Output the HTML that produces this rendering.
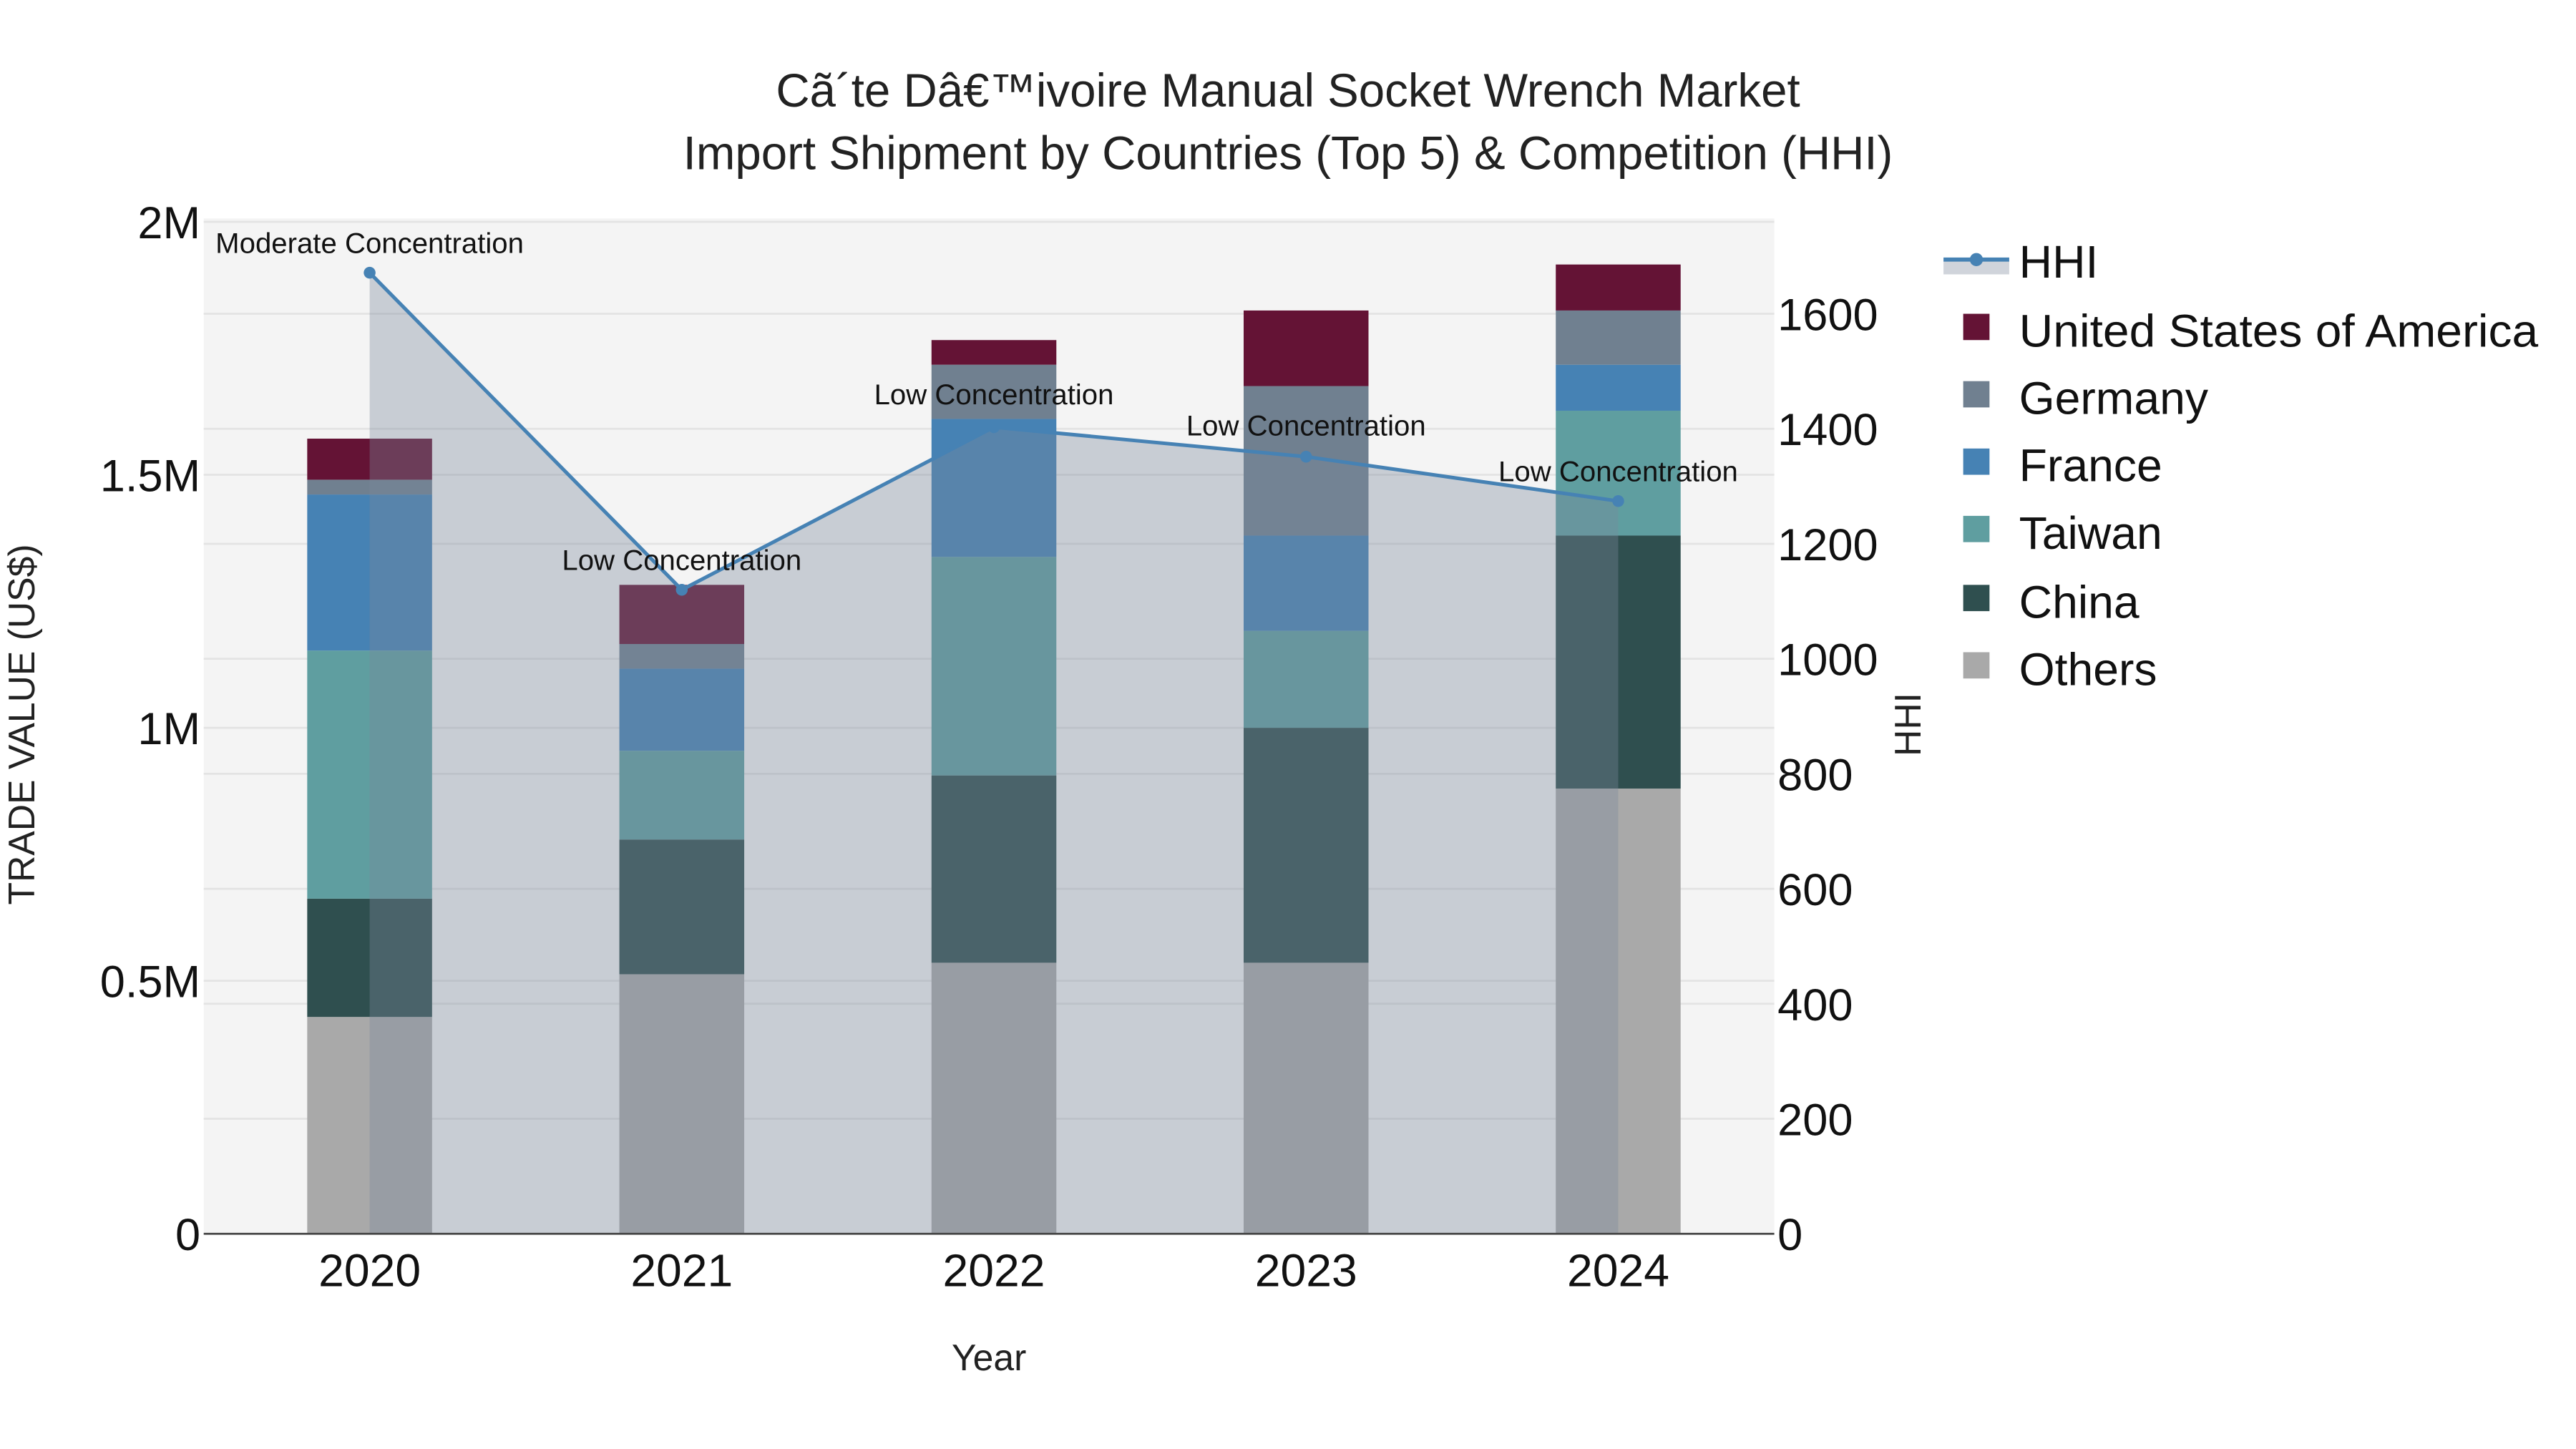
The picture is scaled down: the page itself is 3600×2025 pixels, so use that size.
<!DOCTYPE html>
<html><head><meta charset="utf-8"><style>html,body{margin:0;padding:0;background:#fff}svg{display:block}</style></head>
<body>
<svg width="3600" height="2025" viewBox="0 0 1568 882" xmlns="http://www.w3.org/2000/svg" font-family="Liberation Sans, Arial, sans-serif">
<rect x="0" y="0" width="1568" height="882" fill="#fff"/>
<rect x="124" y="133" width="956" height="618" fill="#f4f4f4"/>
<g stroke="#e3e3e3" stroke-width="1.2">
<line x1="124" x2="1080" y1="597" y2="597"/><line x1="124" x2="1080" y1="443" y2="443"/><line x1="124" x2="1080" y1="289" y2="289"/><line x1="124" x2="1080" y1="135" y2="135"/>
<line x1="124" x2="1080" y1="681" y2="681"/><line x1="124" x2="1080" y1="611" y2="611"/><line x1="124" x2="1080" y1="541" y2="541"/><line x1="124" x2="1080" y1="471" y2="471"/><line x1="124" x2="1080" y1="401" y2="401"/><line x1="124" x2="1080" y1="331" y2="331"/><line x1="124" x2="1080" y1="261" y2="261"/><line x1="124" x2="1080" y1="191" y2="191"/>
</g>
<g>
<rect x="187" y="619" width="76" height="132" fill="#a9a9a9"/><rect x="187" y="547" width="76" height="72" fill="#2f4f4f"/><rect x="187" y="396" width="76" height="151" fill="#5f9ea0"/><rect x="187" y="301" width="76" height="95" fill="#4682b4"/><rect x="187" y="292" width="76" height="9" fill="#708090"/><rect x="187" y="267" width="76" height="25" fill="#641335"/>
<rect x="377" y="593" width="76" height="158" fill="#a9a9a9"/><rect x="377" y="511" width="76" height="82" fill="#2f4f4f"/><rect x="377" y="457" width="76" height="54" fill="#5f9ea0"/><rect x="377" y="407" width="76" height="50" fill="#4682b4"/><rect x="377" y="392" width="76" height="15" fill="#708090"/><rect x="377" y="356" width="76" height="36" fill="#641335"/>
<rect x="567" y="586" width="76" height="165" fill="#a9a9a9"/><rect x="567" y="472" width="76" height="114" fill="#2f4f4f"/><rect x="567" y="339" width="76" height="133" fill="#5f9ea0"/><rect x="567" y="255" width="76" height="84" fill="#4682b4"/><rect x="567" y="222" width="76" height="33" fill="#708090"/><rect x="567" y="207" width="76" height="15" fill="#641335"/>
<rect x="757" y="586" width="76" height="165" fill="#a9a9a9"/><rect x="757" y="443" width="76" height="143" fill="#2f4f4f"/><rect x="757" y="384" width="76" height="59" fill="#5f9ea0"/><rect x="757" y="326" width="76" height="58" fill="#4682b4"/><rect x="757" y="235" width="76" height="91" fill="#708090"/><rect x="757" y="189" width="76" height="46" fill="#641335"/>
<rect x="947" y="480" width="76" height="271" fill="#a9a9a9"/><rect x="947" y="326" width="76" height="154" fill="#2f4f4f"/><rect x="947" y="250" width="76" height="76" fill="#5f9ea0"/><rect x="947" y="222" width="76" height="28" fill="#4682b4"/><rect x="947" y="189" width="76" height="33" fill="#708090"/><rect x="947" y="161" width="76" height="28" fill="#641335"/>
</g>
<polygon points="225,166 415,359 605,260 795,278 985,305 985,751 225,751" fill="rgb(122,136,155)" fill-opacity="0.36"/>
<polyline points="225,166 415,359 605,260 795,278 985,305" fill="none" stroke="#4682b4" stroke-width="2.2"/>
<g fill="#4682b4"><circle cx="225" cy="166" r="3.6"/><circle cx="415" cy="359" r="3.6"/><circle cx="605" cy="260" r="3.6"/><circle cx="795" cy="278" r="3.6"/><circle cx="985" cy="305" r="3.6"/></g>
<line x1="124" x2="1080" y1="751" y2="751" stroke="#444" stroke-width="1.2"/>
<g font-size="17.5" fill="#111" text-anchor="middle">
<text x="225" y="154">Moderate Concentration</text>
<text x="415" y="347">Low Concentration</text>
<text x="605" y="246">Low Concentration</text>
<text x="795" y="265">Low Concentration</text>
<text x="985" y="293">Low Concentration</text>
</g>
<g font-size="27.5" fill="#111" text-anchor="end">
<text x="122" y="145">2M</text><text x="122" y="299">1.5M</text><text x="122" y="453">1M</text><text x="122" y="607">0.5M</text><text x="122" y="761">0</text>
</g>
<g font-size="27.5" fill="#111">
<text x="1082" y="201">1600</text><text x="1082" y="271">1400</text><text x="1082" y="341">1200</text><text x="1082" y="411">1000</text><text x="1082" y="481">800</text><text x="1082" y="551">600</text><text x="1082" y="621">400</text><text x="1082" y="691">200</text><text x="1082" y="761">0</text>
</g>
<g font-size="28" fill="#111" text-anchor="middle">
<text x="225" y="783">2020</text><text x="415" y="783">2021</text><text x="605" y="783">2022</text><text x="795" y="783">2023</text><text x="985" y="783">2024</text>
</g>
<text x="602" y="834" font-size="22.5" fill="#222" text-anchor="middle">Year</text>
<text transform="translate(21,441) rotate(-90)" font-size="22.5" fill="#222" text-anchor="middle">TRADE VALUE (US$)</text>
<text transform="translate(1169,441) rotate(-90)" font-size="22.5" fill="#222" text-anchor="middle">HHI</text>
<g font-size="28.5" fill="#222" text-anchor="middle">
<text x="784" y="65">Cã´te Dâ€™ivoire Manual Socket Wrench Market</text>
<text x="784" y="103">Import Shipment by Countries (Top 5) &amp; Competition (HHI)</text>
</g>
<rect x="1183" y="159" width="40" height="8" fill="#d0d4db"/>
<line x1="1183" x2="1223" y1="158" y2="158" stroke="#4682b4" stroke-width="2.5"/>
<circle cx="1203" cy="158" r="4" fill="#4682b4"/>
<g>
<rect x="1195" y="191" width="16" height="16" fill="#641335"/>
<rect x="1195" y="232" width="16" height="16" fill="#708090"/>
<rect x="1195" y="273" width="16" height="16" fill="#4682b4"/>
<rect x="1195" y="314" width="16" height="16" fill="#5f9ea0"/>
<rect x="1195" y="356" width="16" height="16" fill="#2f4f4f"/>
<rect x="1195" y="397" width="16" height="16" fill="#a9a9a9"/>
</g>
<g font-size="28" fill="#111">
<text x="1229" y="169">HHI</text>
<text x="1229" y="211" textLength="316" lengthAdjust="spacingAndGlyphs">United States of America</text>
<text x="1229" y="252">Germany</text>
<text x="1229" y="293">France</text>
<text x="1229" y="334">Taiwan</text>
<text x="1229" y="376">China</text>
<text x="1229" y="417">Others</text>
</g>
</svg>
</body></html>
